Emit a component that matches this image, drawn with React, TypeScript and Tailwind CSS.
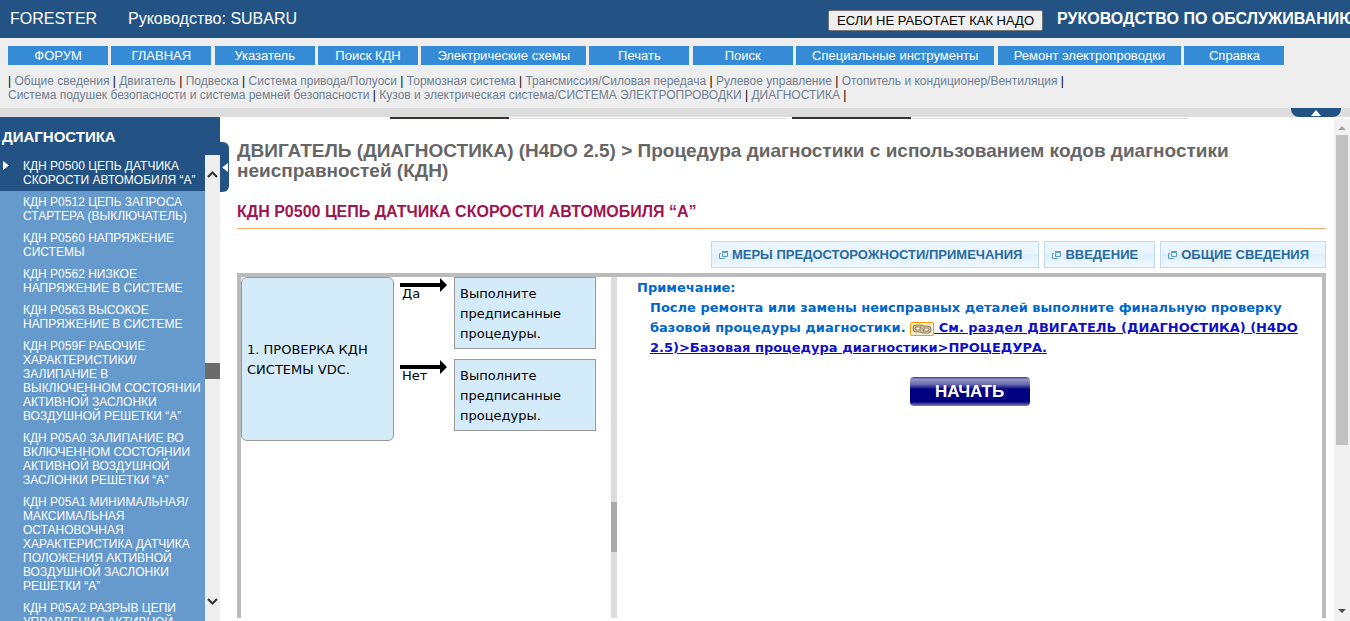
import type { ReactNode } from 'react';

const navItems = [
  'ФОРУМ',
  'ГЛАВНАЯ',
  'Указатель',
  'Поиск КДН',
  'Электрические схемы',
  'Печать',
  'Поиск',
  'Специальные инструменты',
  'Ремонт электропроводки',
  'Справка',
];

const sectionRows = [
  [
    'Общие сведения',
    'Двигатель',
    'Подвеска',
    'Система привода/Полуоси',
    'Тормозная система',
    'Трансмиссия/Силовая передача',
    'Рулевое управление',
    'Отопитель и кондиционер/Вентиляция',
  ],
  [
    'Система подушек безопасности и система ремней безопасности',
    'Кузов и электрическая система/СИСТЕМА ЭЛЕКТРОПРОВОДКИ',
    'ДИАГНОСТИКА',
  ],
];

const codes = [
  'КДН P0500 ЦЕПЬ ДАТЧИКА СКОРОСТИ АВТОМОБИЛЯ “A”',
  'КДН P0512 ЦЕПЬ ЗАПРОСА СТАРТЕРА (ВЫКЛЮЧАТЕЛЬ)',
  'КДН P0560 НАПРЯЖЕНИЕ СИСТЕМЫ',
  'КДН P0562 НИЗКОЕ НАПРЯЖЕНИЕ В СИСТЕМЕ',
  'КДН P0563 ВЫСОКОЕ НАПРЯЖЕНИЕ В СИСТЕМЕ',
  'КДН P059F РАБОЧИЕ ХАРАКТЕРИСТИКИ/ ЗАЛИПАНИЕ В ВЫКЛЮЧЕННОМ СОСТОЯНИИ АКТИВНОЙ ЗАСЛОНКИ ВОЗДУШНОЙ РЕШЕТКИ “A”',
  'КДН P05A0 ЗАЛИПАНИЕ ВО ВКЛЮЧЕННОМ СОСТОЯНИИ АКТИВНОЙ ВОЗДУШНОЙ ЗАСЛОНКИ РЕШЕТКИ “A”',
  'КДН P05A1 МИНИМАЛЬНАЯ/ МАКСИМАЛЬНАЯ ОСТАНОВОЧНАЯ ХАРАКТЕРИСТИКА ДАТЧИКА ПОЛОЖЕНИЯ АКТИВНОЙ ВОЗДУШНОЙ ЗАСЛОНКИ РЕШЕТКИ “A”',
  'КДН P05A2 РАЗРЫВ ЦЕПИ УПРАВЛЕНИЯ АКТИВНОЙ',
];

function PopupIcon() {
  return (
    <svg width="9" height="8" viewBox="0 0 9 8" fill="none" stroke="#5b9bc8" className="shrink-0">
      <path d="M3.5 1.5h5v4h-5zM3 .5h6" />
      <path d="M2 2.5H.5v5h5V7" />
    </svg>
  );
}

function ChainIcon() {
  return (
    <svg width="24" height="14" viewBox="0 0 24 14" fill="none" className="inline-block align-middle">
      <rect x=".5" y=".5" width="23" height="13" rx="1.5" fill="#fdf0d0" stroke="#f90" />
      <g stroke="#8a7f70" strokeWidth="3">
        <rect x="4" y="4" width="9" height="5" rx="2.5" />
        <rect x="11" y="5" width="9" height="5" rx="2.5" />
      </g>
      <g stroke="#f3d28c">
        <rect x="4" y="4" width="9" height="5" rx="2.5" />
        <rect x="11" y="5" width="9" height="5" rx="2.5" />
      </g>
    </svg>
  );
}

function PopupButton({ children }: { children: ReactNode }) {
  return (
    <button className="flex h-[27px] items-center gap-1 border border-[#c1dbee] bg-linear-to-b from-[#ebf5fd] from-50% via-[#deeffc] via-50% to-[#f0f8ff] pr-4 pl-[7px] text-[13px] font-bold text-[#2a6a9e]">
      <PopupIcon />
      {children}
    </button>
  );
}

function Branch({ label }: { label: string }) {
  return (
    <div className="flex gap-[7px]">
      <div className="w-[47px]">
        <svg width="47" height="14" viewBox="0 0 47 14" className="mt-px block">
          <path d="M0 5h40V0l7 7-7 7V9H0z" />
        </svg>
        <div className="-mt-2 pl-0.5">{label}</div>
      </div>
      <div className="w-[142px] border border-[#999] bg-[#d4ecfa] px-[5px] pt-1.5 pb-1">
        Выполните предписанные процедуры.
      </div>
    </div>
  );
}

function Sidebar() {
  return (
    <aside className="relative flex w-[220px] shrink-0 flex-col bg-[#225384] text-white">
      <h2 className="h-[38px] pt-2.5 pl-0.5 text-[15px] leading-5 font-bold">ДИАГНОСТИКА</h2>
      <div className="flex min-h-0 flex-1">
        <ul className="flex-1 overflow-hidden bg-[#6699cc] text-xs leading-[14px]">
          {codes.map((code, i) => (
            <li key={code} className={i === 0 ? 'relative bg-[#225384]' : ''}>
              {i === 0 && (
                <svg width="6" height="9" viewBox="0 0 6 9" fill="white" className="absolute top-1.5 left-[3px]">
                  <path d="M0 0l6 4.5L0 9z" />
                </svg>
              )}
              <a href="#" className="block py-1 pl-[23px]">{code}</a>
            </li>
          ))}
        </ul>
        <div className="flex w-[15px] shrink-0 flex-col items-center bg-[#eee] py-4">
          <svg width="11" height="7" viewBox="0 0 11 7" fill="none" stroke="#333" strokeWidth="2">
            <path d="M1 6l4.500-4.500L10 6" />
          </svg>
          <div className="mt-[185px] h-4 w-full bg-[#6a6a6a]" />
          <svg width="11" height="7" viewBox="0 0 11 7" fill="none" stroke="#333" strokeWidth="2" className="mt-auto">
            <path d="M1 1l4.500 4.500L10 1" />
          </svg>
        </div>
      </div>
      <button aria-label="Скрыть меню" className="absolute top-[25px] -right-[9px] flex h-[50px] w-[9px] items-center justify-center rounded-r-md bg-[#225384]">
        <svg width="6" height="9" viewBox="0 0 6 9" fill="white">
          <path d="M6 0L0 4.500 6 9z" />
        </svg>
      </button>
    </aside>
  );
}

export default function App() {
  return (
    <div className="flex h-screen flex-col overflow-hidden bg-white font-['Liberation_Sans',sans-serif]">
      <header className="flex h-[38px] shrink-0 items-center overflow-hidden bg-[#225384] pl-2.5 whitespace-nowrap text-white">
        <span className="w-[118px]">FORESTER</span>
        <span>Руководство: SUBARU</span>
        <button className="mt-0.5 ml-auto h-[21px] rounded-xs border border-[#767676] bg-[#efefef] px-2 text-[13px] leading-none text-black">
          ЕСЛИ НЕ РАБОТАЕТ КАК НАДО
        </button>
        <span className="ml-3.5 w-[293px] font-bold">РУКОВОДСТВО ПО ОБСЛУЖИВАНИЮ</span>
      </header>

      <div className="relative shrink-0 border-b-[9px] border-[#ddd] bg-[#eee] px-2 pt-2 pb-1.5">
        <nav className="text-xs leading-[19px]">
          {navItems.map((item) => (
            <span key={item}>
              <a href="#" className="inline-block min-w-[100px] bg-[#368bd6] px-4 text-center align-top text-[13px] leading-[19px] text-white">{item}</a>{' '}
            </span>
          ))}
        </nav>
        <div className="mt-[9px] text-xs leading-[14px] text-[#708090]">
          {sectionRows.map((row, i) => (
            <div key={i}>
              {i === 0 && <span className="text-black">| </span>}
              {row.map((name) => (
                <span key={name}>
                  <a href="#">{name}</a>
                  <span className="text-black"> | </span>
                </span>
              ))}
            </div>
          ))}
        </div>
        <button aria-label="Свернуть" className="absolute right-[9px] -bottom-[9px] flex h-[9px] w-[50px] items-end justify-center rounded-b-lg bg-[#225384] pb-px">
          <svg width="10" height="6" viewBox="0 0 10 6" fill="white">
            <path d="M0 6l5-6 5 6z" />
          </svg>
        </button>
      </div>

      <div className="flex min-h-0 flex-1">
        <Sidebar />

        <main className="flex min-w-0 flex-1 flex-col pr-2 pl-[17px]">
          {/* bottom edge of the banners scrolled out of view */}
          <div className="flex h-0.5 shrink-0 gap-[5px] pl-[153px]">
            <div className="flex w-[397px] items-end">
              <div className="h-0.5 w-[119px] bg-[#3c3230]" />
              <div className="h-px flex-1 bg-[#ddd]" />
            </div>
            <div className="flex w-[397px] items-end">
              <div className="h-0.5 w-[119px] bg-[#333]" />
              <div className="h-px flex-1 bg-[#ddd]" />
            </div>
          </div>
          <h1 className="mt-[22px] text-[19px] leading-5 font-bold text-[#666]">
            ДВИГАТЕЛЬ (ДИАГНОСТИКА) (H4DO 2.5) &gt; Процедура диагностики с использованием кодов диагностики неисправностей (КДН)
          </h1>
          <h2 className="mt-[21px] border-b border-[#f9a860] pb-1.5 leading-5 font-bold text-[#a01450]">
            КДН P0500 ЦЕПЬ ДАТЧИКА СКОРОСТИ АВТОМОБИЛЯ “A”
          </h2>
          <div className="mt-3 mb-[5px] flex justify-end gap-[5px]">
            <PopupButton>МЕРЫ ПРЕДОСТОРОЖНОСТИ/ПРИМЕЧАНИЯ</PopupButton>
            <PopupButton>ВВЕДЕНИЕ</PopupButton>
            <PopupButton>ОБЩИЕ СВЕДЕНИЯ</PopupButton>
          </div>

          <div className="mb-[3px] flex min-h-0 flex-1 border-4 border-b-0 border-[#bbb] font-['DejaVu_Sans',sans-serif] text-[13px] leading-5">
            <section className="flex w-[370px] shrink-0 items-start gap-1.5">
              <div className="flex h-[164px] w-[153px] items-center rounded-md border border-[#999] bg-[#d4ecfa] px-[5px] pt-0.5">
                1. ПРОВЕРКА КДН СИСТЕМЫ VDC.
              </div>
              <div className="flex flex-col gap-2.5">
                <Branch label="Да" />
                <Branch label="Нет" />
              </div>
            </section>
            <div className="flex w-1.5 shrink-0 flex-col justify-center bg-[#ddd]">
              <div className="mt-[158px] h-[50px] bg-[#aaa]" />
            </div>
            <section className="min-w-0 flex-1 font-bold text-[#0066cc]">
              <div className="pt-px pr-2 pl-5">
                <p>Примечание:</p>
                <p className="pl-[13px]">
                  После ремонта или замены неисправных деталей выполните финальную проверку базовой процедуры диагностики.{' '}
                  <a href="#" className="text-[#0f0fc8] underline">
                    <ChainIcon /> См. раздел ДВИГАТЕЛЬ (ДИАГНОСТИКА) (H4DO 2.5)&gt;Базовая процедура диагностики&gt;ПРОЦЕДУРА.
                  </a>
                </p>
              </div>
              <button className="mx-auto mt-[19px] block h-[29px] w-[120px] rounded-[4px] bg-[linear-gradient(#3c3c90,#9494c8_8%,#6c6cb0_25%,#000080_42%,#000080_85%,#8080c0)] font-['Liberation_Sans',sans-serif] text-[17px] font-bold text-white">
                НАЧАТЬ
              </button>
            </section>
          </div>
        </main>

        <div className="mt-0.5 flex w-4 shrink-0 flex-col items-center bg-[#f1f1f1] pt-[7px] pb-2">
          <svg width="8" height="4" viewBox="0 0 8 4" fill="#a3a3a3">
            <path d="M0 4l4-4 4 4z" />
          </svg>
          <div className="mt-[5px] h-[310px] w-3 bg-[#c1c1c1]" />
          <svg width="8" height="4" viewBox="0 0 8 4" fill="#505050" className="mt-auto">
            <path d="M0 0l4 4 4-4z" />
          </svg>
        </div>
      </div>
    </div>
  );
}
